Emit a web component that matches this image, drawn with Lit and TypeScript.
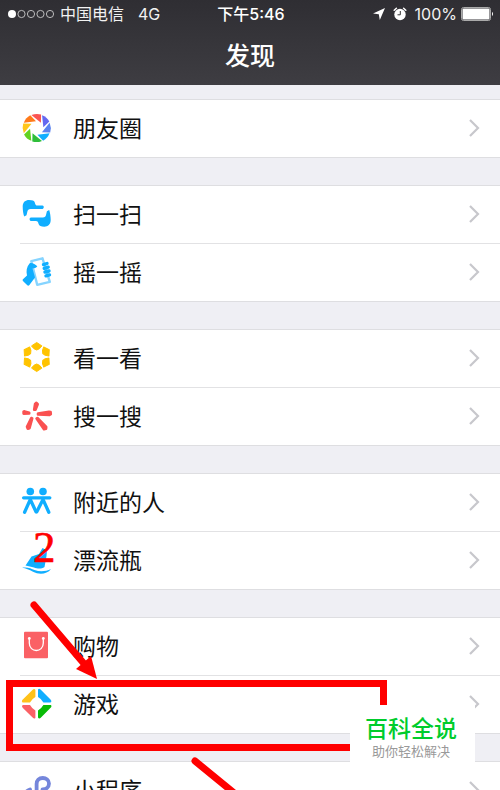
import { LitElement, html, css, svg, type SVGTemplateResult } from "lit";
import { customElement } from "lit/decorators.js";

interface Entry {
  label: string;
  icon: SVGTemplateResult;
}

const blades = ["#fa5452", "#6467f0", "#5a82f0", "#10aeff", "#2fbe3a", "#62d21f", "#ffc61a", "#ff7a1a"];
const sixths = [0, 60, 120, 180, 240, 300];
const hand =
  "M1.7 7.5C1.7 3 4.5.9 8 .9C11.5 .9 13.2 1.5 13.8 3.5C14.2 5.5 14.8 6.6 16.5 6.6H21.5C23.2 6.6 23.2 10 21.5 10H9.5C7.5 10 6.8 11 6.4 12.5L5.5 16.3L3.2 17.6C2.3 15 1.7 11 1.7 7.5Z";

const moments = svg`<g transform="translate(15.7 15)">
  ${blades.map((c, i) => svg`<path fill=${c} transform="rotate(${i * 45})" d="M-5.3-12.9A14 14 0 0 1 4.4-13.5L4.2-5.2Z"/>`)}
</g>`;

const scan = svg`<g fill="#10aeff"><path d=${hand}/><path transform="rotate(180 15.7 14.3)" d=${hand}/></g>`;

const shake = svg`
  <path d="M10.3 4.2L21.5 1.3L28.8 24.8L16.2 27.8Z" fill="#fff" stroke="#86d4ff" stroke-width="2.4" stroke-linejoin="round"/>
  <path fill="#10aeff" d="M1.7 22.5L6 18.5C5 14 5.5 10 8.5 6.5C10.5 5 14 7.5 16.3 9.2C15.5 11 13 11.2 11.5 11.5L14 20.5L8.2 28.3C7.5 28.9 6.8 28.8 6.3 28.2L1.7 23.8Z"/>
  <path fill="none" stroke="#10aeff" stroke-width="3.4" stroke-linecap="round" d="M22.5 7.6L26 6.5M23.2 11.3L27.2 10.2M24 15L28 14M25 18.8L28.5 17.9"/>`;

const look = svg`<g transform="translate(15.7 14)" fill="#ffc300" stroke="#ffc300" stroke-linejoin="round">
  ${sixths.map((a) => svg`<path transform="rotate(${a})" d="M0-14.5L5.2-11.1L2.8-8.3L0-7L-2.8-8.3L-5.2-11.1Z"/>`)}
</g>`;

const search = svg`<path fill="#fa5151" stroke="#fa5151" stroke-width="2.6" stroke-linejoin="round"
  d="M14.1 3L15.4 1.8L16.7 3.2L14.5 8.8L13.2 8.8ZM29.6 11L29.8 13.2L28.5 14L17 13.5V12.5L28 10.8ZM23 28.2L25 27.8L25.2 26L16.4 17L15.6 17.6ZM6 25.8L6.8 27.7L8.5 27.2L11.2 17.4L10.3 17ZM2.6 10.5V12.6L8.2 12.4V11.7L3.6 10.4Z"/>`;

const nearby = svg`<g fill="none" stroke="#10aeff" stroke-width="3.3" stroke-linecap="round" stroke-linejoin="round">
  <path d="M2.6 10.8H28.8"/><path d="M3.6 25.2L9.3 12.5L15 24.8"/><path d="M15.8 24.8L22 12.5L27.8 25.2"/>
</g><circle cx="9.3" cy="4.5" r="3.8" fill="#10aeff"/><circle cx="22" cy="4.5" r="3.8" fill="#10aeff"/>`;

const bottle = svg`<path fill="#10aeff" d="M21.5 3L26 5.5L25.5 11L23.5 22C20 24.5 16 23.5 13 22.5L4.5 20.5L10.5 11.5L18 9Z"/>
  <path fill="#10aeff" d="M1 22.8C6 21.5 10 23.5 13.5 25C19 27 25 26.500 30 24C26 29.5 18 30 12 26.8C8 24.5 5 23.5 1 22.8Z"/>`;

const bag = svg`<rect x="3" y=".7" width="24" height="26.6" rx="1" fill="#fa6165"/>
  <path fill="none" stroke="#fff" stroke-width="1.3" d="M8.3 7.5V12C8.3 22 22.3 22 22.3 12V7.5"/>
  <circle cx="8.3" cy="7.4" r="1.4" fill="#fff"/><circle cx="22.3" cy="7.4" r="1.4" fill="#fff"/>`;

const wedge = "M-1.3-13.7V-6.7Q-4.8-4.8-6.7-1.3H-14.2Q-15.4-2.4-14.4-3.6L-4.3-13.8Q-2.3-15.6-1.3-13.7Z";
const games = svg`<g transform="translate(15.7 14.7)">
  ${["#ffc21a", "#10aeff", "#09bb07", "#fa6165"].map((c, i) => svg`<path fill=${c} transform="rotate(${i * 90})" d=${wedge}/>`)}
</g>`;

const mini = svg`<path fill="none" stroke="#7586db" stroke-width="3.8" stroke-linecap="round"
  d="M21.5 14.5C25 14.5 28 12 28 8.5C28 5 25 3 21.8 3C18 3 15.6 5.5 15.6 9V22C15.6 26 13 28 9.5 28C6 28 3.2 26 3.2 22.5C3.2 19 5 16 9 14.5"/>`;

const groups: Entry[][] = [
  [{ label: "朋友圈", icon: moments }],
  [{ label: "扫一扫", icon: scan }, { label: "摇一摇", icon: shake }],
  [{ label: "看一看", icon: look }, { label: "搜一搜", icon: search }],
  [{ label: "附近的人", icon: nearby }, { label: "漂流瓶", icon: bottle }],
  [{ label: "购物", icon: bag }, { label: "游戏", icon: games }],
  [{ label: "小程序", icon: mini }],
];

@customElement("status-bar")
class StatusBar extends LitElement {
  static styles = css`
    :host {
      display: grid;
      grid-template-columns: 1fr auto 1fr;
      align-items: center;
      height: 28px;
      padding: 0 6px 0 8px;
      font-size: 16px;
      line-height: 28px;
      color: #f2f2f2;
      white-space: nowrap;
    }
    .side { display: flex; align-items: center; }
    .end { justify-content: flex-end; }
    .carrier { margin: 0 14px 0 5px; }
    .time { font-weight: 500; color: #fff; }
    .arrow { margin-right: 8px; }
    .alarm { margin-right: 8px; }
    .battery { margin-left: 4px; }
    svg { display: block; flex: none; }
  `;
  render() {
    return html`
      <div class="side">
        <svg width="47" height="10" viewBox="1 0 47 10">
          <circle cx="5" cy="5" r="4" fill="#fff" />
          ${[14.5, 24, 33.5, 43].map((x) => svg`<circle cx=${x} cy="5" r="3.6" fill="none" stroke="#ddd" stroke-width=".8"/>`)}
        </svg>
        <span class="carrier">中国电信</span><span>4G</span>
      </div>
      <span class="time">下午5:46</span>
      <div class="side end">
        <svg class="arrow" width="12" height="12" viewBox="0 0 12 12"><path fill="#fff" d="M12 0L6.8 12L5.8 6.3L0 5.6Z" /></svg>
        <svg class="alarm" width="14" height="14" viewBox="0 0 14 14">
          <circle cx="7" cy="7.5" r="5.7" fill="#fff" />
          <path fill="none" stroke="#fff" stroke-width="1.5" stroke-linecap="round" d="M1.2 3.2L3.4 1.2M12.8 3.2L10.6 1.2" />
          <path fill="none" stroke="#333" d="M7.3 4V7.8H4.5" />
        </svg>
        <span>100%</span>
        <svg class="battery" width="33" height="14" viewBox="0 0 33 14">
          <rect x=".5" y=".5" width="29" height="13" rx="2" fill="none" stroke="#aaa" />
          <rect x="1.5" y="1.5" width="27" height="11" rx="1" fill="#fff" />
          <path d="M31 4.8Q33 7 31 9.2Z" fill="#fff" />
        </svg>
      </div>
    `;
  }
}

@customElement("menu-group")
class MenuGroup extends LitElement {
  static properties = { entries: { attribute: false } };
  declare entries: Entry[];
  static styles = css`
    :host { display: block; }
    .list {
      margin: 0;
      padding: 0;
      list-style: none;
      background: #fff;
      border-top: 1px solid #dedee1;
      border-bottom: 1px solid #dedee1;
    }
    .item + .item::before {
      content: "";
      display: block;
      height: 1px;
      margin-left: 20px;
      background: #e2e2e4;
    }
    .link {
      display: flex;
      align-items: center;
      height: 57px;
      padding: 0 20px 0 21px;
      color: #111;
      text-decoration: none;
    }
    .icon { flex: none; width: 31px; height: 31px; overflow: visible; }
    .label { flex: 1; margin-left: 21px; font-size: 23px; line-height: 32px; }
    .chevron { flex: none; width: 12px; height: 19px; }
  `;
  render() {
    return html`<ul class="list">
      ${this.entries.map(
        (e) => html`<li class="item">
          <a class="link" href="#">
            <svg class="icon" viewBox="0 0 31 31" aria-hidden="true">${e.icon}</svg>
            <span class="label">${e.label}</span>
            <svg class="chevron" viewBox="0 0 12 19" aria-hidden="true">
              <path d="M2 1L10 9L2 17" fill="none" stroke="#c7c7cc" stroke-width="2.2" />
            </svg>
          </a>
        </li>`
      )}
    </ul>`;
  }
}

@customElement("app-root")
class AppRoot extends LitElement {
  static styles = css`
    :host {
      display: block;
      position: relative;
      height: 100vh;
      overflow: hidden;
      background: #efeff4;
      font-family: Inter, "Noto Sans CJK SC", sans-serif;
    }
    .header { background: linear-gradient(#2f2e33, #3e3d42); color: #fff; }
    .title {
      margin: 0;
      height: 57px;
      font-size: 25px;
      line-height: 56px;
      font-weight: 500;
      text-align: center;
    }
    .groups { display: flex; flex-direction: column; gap: 27px; padding: 14px 0; }
    .marks { position: absolute; top: 0; left: 0; pointer-events: none; }
    .step { font-family: "Liberation Serif", serif; font-size: 45px; }
    .badge {
      position: absolute;
      top: 705px;
      left: 350px;
      box-sizing: border-box;
      width: 125px;
      padding: 10px 3px 3px 0;
      background: #fff;
      text-align: center;
    }
    .name { display: block; font-size: 23px; line-height: 28px; font-weight: 500; color: #00cc2c; }
    .motto { display: block; font-size: 13px; line-height: 16px; color: #999; }
  `;
  render() {
    return html`
      <header class="header">
        <status-bar></status-bar>
        <h1 class="title">发现</h1>
      </header>
      <nav class="groups">${groups.map((g) => html`<menu-group .entries=${g}></menu-group>`)}</nav>
      <svg class="marks" width="400" height="850" viewBox="0 0 400 850">
        <text class="step" x="33" y="562" fill="#f00" stroke="#f00" stroke-width=".6">2</text>
        <rect x="9.5" y="683.5" width="374" height="64" fill="none" stroke="#f00" stroke-width="7" />
        <path d="M34 605L86 666M195 761L250 806" stroke="#f00" stroke-width="7" stroke-linecap="round" />
        <path d="M97 679L76 669L91 656Z" fill="#f00" />
      </svg>
      <aside class="badge"><span class="name">百科全说</span><span class="motto">助你轻松解决</span></aside>
    `;
  }
}
